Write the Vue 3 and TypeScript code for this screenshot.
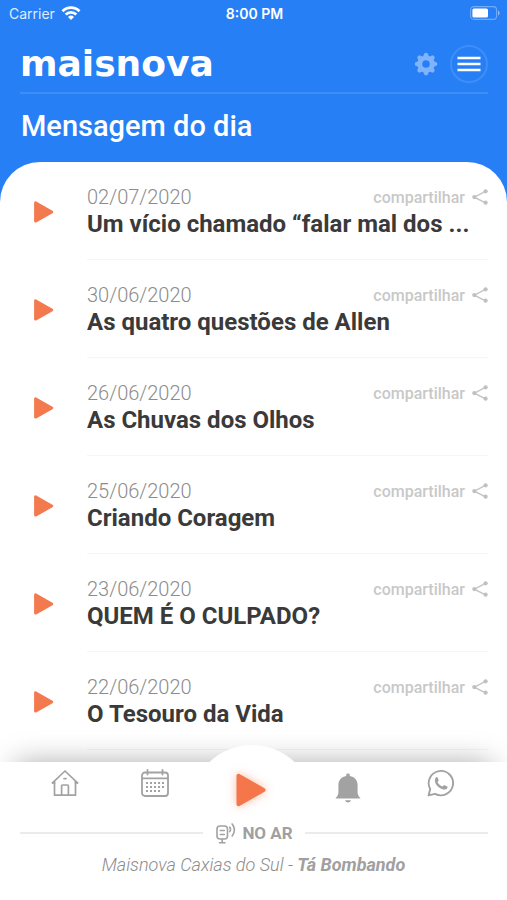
<script setup lang="ts">
interface Message {
  date: string
  title: string
}

const messages: Message[] = [
  { date: '02/07/2020', title: 'Um vício chamado “falar mal dos ...' },
  { date: '30/06/2020', title: 'As quatro questões de Allen' },
  { date: '26/06/2020', title: 'As Chuvas dos Olhos' },
  { date: '25/06/2020', title: 'Criando Coragem' },
  { date: '23/06/2020', title: 'QUEM É O CULPADO?' },
  { date: '22/06/2020', title: 'O Tesouro da Vida' },
]

const calendarDots: { x: number; y: number }[] = []
for (let row = 0; row < 3; row++) {
  for (let col = 0; col < 5; col++) {
    if (row === 2 && col === 4) continue
    calendarDots.push({ x: 5 + col * 4, y: 13 + row * 4 })
  }
}
</script>

<template>
  <div class="app">
    <header class="header">
      <div class="status">
        <div class="carrier">
          <span>Carrier</span>
          <svg width="20" height="14" viewBox="0 0 20 14" aria-hidden="true">
            <g fill="none" stroke="#fff" stroke-width="2.8">
              <path d="M1.5 5.2a12 12 0 0 1 17 0" />
              <path d="M4.7 8.6a7.6 7.6 0 0 1 10.6 0" />
            </g>
            <path d="M7 11a4.400 4.400 0 0 1 6 0L10 14z" fill="#fff" />
          </svg>
        </div>
        <span class="time">8:00 PM</span>
        <svg class="battery" width="30" height="14" viewBox="0 0 30 14" aria-hidden="true">
          <rect x="0.6" y="0.6" width="26" height="12.8" rx="3.4" fill="none" stroke="#fff" stroke-opacity=".35" stroke-width="1.1" />
          <rect x="2.4" y="2.4" width="15.6" height="9.2" rx="1.6" fill="#fff" />
          <path d="M28 4.6c2.2.8 2.2 4 0 4.8z" fill="#fff" fill-opacity=".45" />
        </svg>
      </div>

      <div class="bar">
        <a class="brand" href="#">maisnova</a>
        <button class="gear" type="button" aria-label="Configurações">
          <svg width="24" height="24" viewBox="0 0 24 24">
            <g fill="#7fb3fb">
              <path
                fill-rule="evenodd"
                d="M12 3.4a8.6 8.6 0 1 0 0 17.2 8.6 8.6 0 0 0 0-17.2zM12 8.2a3.8 3.8 0 1 1 0 7.6 3.8 3.8 0 0 1 0-7.6z"
              />
              <path
                v-for="n in 8"
                :key="n"
                d="M9 4.600 10.400 1.200Q12 .2 13.600 1.200L15 4.600z"
                :transform="`rotate(${n * 45} 12 12)`"
              />
            </g>
          </svg>
        </button>
        <button class="menu" type="button" aria-label="Menu">
          <svg width="24" height="16" viewBox="0 0 24 16">
            <path d="M.5 2h23M.5 8h23M.5 14h23" stroke="#fff" stroke-width="2.6" />
          </svg>
        </button>
      </div>

      <h1 class="heading">Mensagem do dia</h1>
    </header>

    <main class="sheet">
      <ul class="list">
        <li v-for="message in messages" :key="message.date" class="item">
          <button class="play" type="button" :aria-label="`Ouvir ${message.title}`">
            <svg width="20" height="22" viewBox="0 0 20 22">
              <path d="M1.500 1.800v18.400L17.800 11z" fill="#f3794f" stroke="#f3794f" stroke-width="2.800" stroke-linejoin="round" />
            </svg>
          </button>
          <div class="body">
            <div class="meta">
              <span class="date">{{ message.date }}</span>
              <button class="share" type="button">
                <span>compartilhar</span>
                <svg width="16" height="16" viewBox="0 0 16 16" aria-hidden="true">
                  <path d="M13.4 2.4 2.4 8.2l11 5.6" fill="none" stroke="#c4c4c4" stroke-width="1.4" />
                  <g fill="#c0c0c0">
                    <circle cx="13.6" cy="2.3" r="2.1" />
                    <circle cx="2.3" cy="8.1" r="2.1" />
                    <circle cx="13.6" cy="13.7" r="2.1" />
                  </g>
                </svg>
              </button>
            </div>
            <h2 class="title">{{ message.title }}</h2>
          </div>
        </li>
      </ul>
    </main>

    <footer class="player">
      <nav class="nav">
        <a href="#" aria-label="Início">
          <svg width="28" height="28" viewBox="0 0 28 28" fill="none" stroke="#a2a2a2" stroke-width="1.7" stroke-linejoin="round" stroke-linecap="round">
            <path d="M1.5 13.8 14 2l12.500 11.800" />
            <path d="M3.500 12.500V26.200H24.500V12.500" />
            <path d="M1.500 13.800H3.500M24.500 13.800H26.500" />
            <path d="M10.600 26.200V17Q10.600 16 11.600 16H16.400Q17.400 16 17.400 17V26.200" />
            <path d="M13 9.600h2" />
          </svg>
        </a>
        <a href="#" aria-label="Programação">
          <svg width="28" height="28" viewBox="0 0 28 28" fill="none" stroke="#a2a2a2" stroke-width="1.800" stroke-linecap="round">
            <rect x="1" y="3.500" width="26" height="23.500" rx="3" />
            <path d="M1 9.400H27M6.500 1V5.500M21.500 1V5.500" />
            <g fill="#a2a2a2" stroke="none">
              <rect v-for="dot in calendarDots" :key="`${dot.x}-${dot.y}`" :x="dot.x" :y="dot.y" width="2" height="2" />
            </g>
          </svg>
        </a>
        <button class="live-play" type="button" aria-label="Tocar ao vivo">
          <svg width="30" height="34" viewBox="0 0 30 34">
            <path d="M2.500 2.800V31.200L27.500 17z" fill="#f4764a" stroke="#f4764a" stroke-width="4" stroke-linejoin="round" />
          </svg>
        </button>
        <a class="bell" href="#" aria-label="Notificações">
          <svg width="26" height="30" viewBox="0 0 26 30" fill="#a2a2a2">
            <path d="M11.200 3V1.800Q11.200 .4 13 .4T14.800 1.800V3C19.600 3.800 22.600 7.200 22.600 12V19C22.600 22 23.800 23.400 25.600 25.600H.4C2.200 23.400 3.400 22 3.400 19V12C3.400 7.200 6.400 3.800 11.200 3z" />
            <path d="M10 27.200h6Q15.200 29.600 13 29.600T10 27.200z" />
          </svg>
        </a>
        <a href="#" aria-label="WhatsApp">
          <svg width="28" height="28" viewBox="0 0 28 28">
            <path d="M1.600 26.400 3.200 20A12.200 12.200 0 1 1 8 24.800z" fill="none" stroke="#a2a2a2" stroke-width="1.900" stroke-linejoin="round" />
            <path d="M9.200 8.200c.7-.3 1.200-.1 1.500.5l.9 2.200c.2.500 0 .9-.4 1.400l-.7.800c1.100 2 2.700 3.500 4.900 4.500l1.100-1.100c.4-.4.800-.4 1.200-.2l2.400 1.200c.6.300.6.800.4 1.300-.6 1.500-2.300 2-4.100 1.600-4.200-.9-7.600-4.100-8.400-7.900-.3-1.700.1-3.600 1.200-4.300z" fill="#a2a2a2" />
          </svg>
        </a>
      </nav>

      <div class="on-air">
        <svg width="22" height="22" viewBox="0 0 22 22" fill="none" stroke="#a2a2a2" stroke-width="1.600" stroke-linecap="round" aria-hidden="true">
          <rect x="2" y="4" width="10.500" height="13" rx="3" />
          <path d="M5.300 8.500H9.300M5.300 12.500H9.300M7.200 17V20.600M4.500 20.800H10" />
          <path d="M14.800 5.200Q16.200 7.400 14.800 9.600M17.200 2Q21.600 8 17.200 14" />
        </svg>
        <span>NO AR</span>
      </div>
      <p class="program">Maisnova Caxias do Sul - <strong>Tá Bombando</strong></p>
    </footer>
  </div>
</template>

<style>
body {
  background: #fff;
}
</style>

<style scoped>
.app {
  display: flex;
  flex-direction: column;
  height: 100vh;
  overflow: hidden;
  background: #277ff6;
  font-family: Roboto, "Liberation Sans", sans-serif;
}

button {
  padding: 0;
  border: 0;
  background: none;
  font: inherit;
  color: inherit;
  cursor: pointer;
}

a {
  color: inherit;
  text-decoration: none;
}

svg {
  display: block;
}

.header {
  flex: none;
  color: #fff;
}

.status {
  display: grid;
  grid-template-columns: 1fr auto 1fr;
  align-items: center;
  height: 26px;
  padding: 0 7px 0 9px;
  font-family: Inter, "Liberation Sans", sans-serif;
  font-size: 14px;
}

.carrier {
  display: flex;
  align-items: center;
  gap: 6px;
  color: #dfecff;
}

.time {
  font-weight: 600;
}

.battery {
  justify-self: end;
}

.bar {
  display: flex;
  align-items: center;
  height: 68px;
  margin: 0 19px 0 20px;
  padding-top: 10px;
  box-sizing: border-box;
  border-bottom: 2px solid #3f8ef8;
}

.brand {
  margin-right: auto;
  font-family: "DejaVu Sans", sans-serif;
  font-size: 36px;
  line-height: 48px;
  font-weight: 700;
}

.gear {
  margin-right: 12px;
}

.menu {
  display: grid;
  place-items: center;
  width: 38px;
  height: 38px;
  box-sizing: border-box;
  border: 2px solid #3f8ef8;
  border-radius: 50%;
}

.heading {
  margin: 0;
  padding: 16px 21px 20px;
  font-size: 29px;
  line-height: 32px;
  font-weight: 500;
}

.sheet {
  flex: 1;
  min-height: 0;
  overflow: hidden;
  border-radius: 40px 40px 0 0;
  background: #fff;
}

.list {
  margin: 0;
  padding: 0;
  list-style: none;
}

.item {
  display: flex;
  height: 98px;
  padding-right: 19px;
}

.play {
  flex: none;
  align-self: flex-start;
  margin: 39px 33px 0 34px;
}

.body {
  flex: 1;
  min-width: 0;
  border-bottom: 1px solid #f6f6f6;
  padding-top: 23px;
}

.meta {
  display: flex;
  align-items: center;
  justify-content: space-between;
  height: 24px;
}

.date {
  font-size: 20px;
  font-weight: 300;
  color: #8c8c8c;
}

.share {
  display: flex;
  align-items: center;
  gap: 7px;
  font-size: 16px;
  font-weight: 500;
  color: #c8c8c8;
}

.title {
  margin: 0;
  overflow: hidden;
  white-space: nowrap;
  text-overflow: ellipsis;
  font-size: 24px;
  line-height: 30px;
  font-weight: 700;
  color: #3a3a3a;
}

.player {
  position: relative;
  flex: none;
  height: 138px;
  background: #fff;
  box-shadow: 0 -14px 28px -16px rgba(0, 0, 0, 0.36);
  color: #a0a0a0;
}

/* Rounded bump behind the live play button */
.player::before {
  content: "";
  position: absolute;
  top: -17px;
  left: 50%;
  width: 124px;
  height: 124px;
  margin-left: -64px;
  border-radius: 50%;
  background: #fff;
}

.nav {
  position: relative;
  display: grid;
  grid-template-columns: 88fr 92fr 100fr 94fr 92fr;
  justify-items: center;
  align-items: start;
  height: 56px;
  padding: 7px 20px 0 21px;
  box-sizing: border-box;
}

.live-play {
  margin-top: 4px;
  filter: drop-shadow(0 0 5px rgba(244, 118, 74, 0.5));
}

.bell {
  margin-top: 4px;
}

.on-air {
  position: relative;
  display: flex;
  align-items: center;
  gap: 5px;
  height: 30px;
  padding: 0 19px 0 20px;
  font-size: 17px;
  font-weight: 700;
}

.on-air::before,
.on-air::after {
  content: "";
  flex: 1;
  height: 2px;
  background: #ebebeb;
}

.on-air::before {
  margin-right: 7px;
}

.on-air::after {
  margin-left: 7px;
}

.program {
  position: relative;
  margin: 5px 0 0;
  text-align: center;
  font-size: 18px;
  line-height: 24px;
  font-style: italic;
  font-weight: 300;
  color: #8c8c8c;
}

.program strong {
  font-weight: 700;
  color: #a0a0a0;
}
</style>
